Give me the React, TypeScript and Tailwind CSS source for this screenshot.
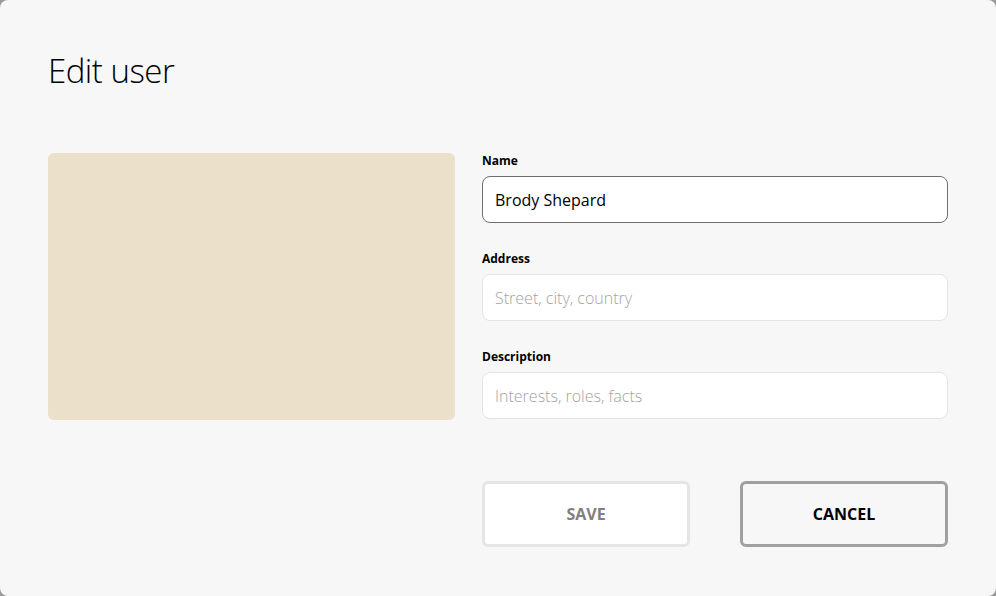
import React, { useState } from "react";

const fieldLabel = "block text-[12px] font-bold leading-[16px] text-black";

const App: React.FC = () => {
  const [name, setName] = useState("Brody Shepard");
  const [address, setAddress] = useState("");
  const [description, setDescription] = useState("");

  return (
    <div className="h-[596px] w-[996px] bg-[#9a9a9a] font-['Open_Sans',sans-serif]">
      <div className="flex h-full flex-col rounded-lg bg-[#f7f7f7] px-12 pt-12">
        <h1 className="text-[33px] font-light leading-[46px] tracking-[-0.5px] text-black">Edit user</h1>

        <div className="mt-[59px] flex gap-[27px]">
          <div className="h-[267px] w-[407px] rounded-md bg-[#ebe0ca]" />

          <div className="flex flex-1 flex-col">
            <label className={fieldLabel}>Name</label>
            <input
              value={name}
              onChange={(e) => setName(e.target.value)}
              className="mt-[7px] h-[47px] rounded-lg border border-[#6f6f6f] bg-white px-3 text-[16px] text-black outline-none"
            />

            <label className={`${fieldLabel} mt-[28px]`}>Address</label>
            <input
              value={address}
              onChange={(e) => setAddress(e.target.value)}
              placeholder="Street, city, country"
              className="mt-[7px] h-[47px] rounded-lg border border-[#e4e4e4] bg-white px-3 text-[16px] font-light text-black outline-none placeholder:text-[#a3a3a3]"
            />

            <label className={`${fieldLabel} mt-[28px]`}>Description</label>
            <input
              value={description}
              onChange={(e) => setDescription(e.target.value)}
              placeholder="Interests, roles, facts"
              className="mt-[7px] h-[47px] rounded-lg border border-[#e4e4e4] bg-white px-3 text-[16px] font-light text-black outline-none placeholder:text-[#a3a3a3]"
            />

            <div className="mt-[62px] grid grid-cols-2 gap-[50px]">
              <button className="h-[66px] rounded-md border-[3px] border-[#e5e5e5] bg-white text-[16px] font-bold text-[#7f7f7f]">
                SAVE
              </button>
              <button className="h-[66px] rounded-md border-[3px] border-[#a0a0a0] bg-transparent text-[16px] font-bold text-black">
                CANCEL
              </button>
            </div>
          </div>
        </div>
      </div>
    </div>
  );
};

export default App;
